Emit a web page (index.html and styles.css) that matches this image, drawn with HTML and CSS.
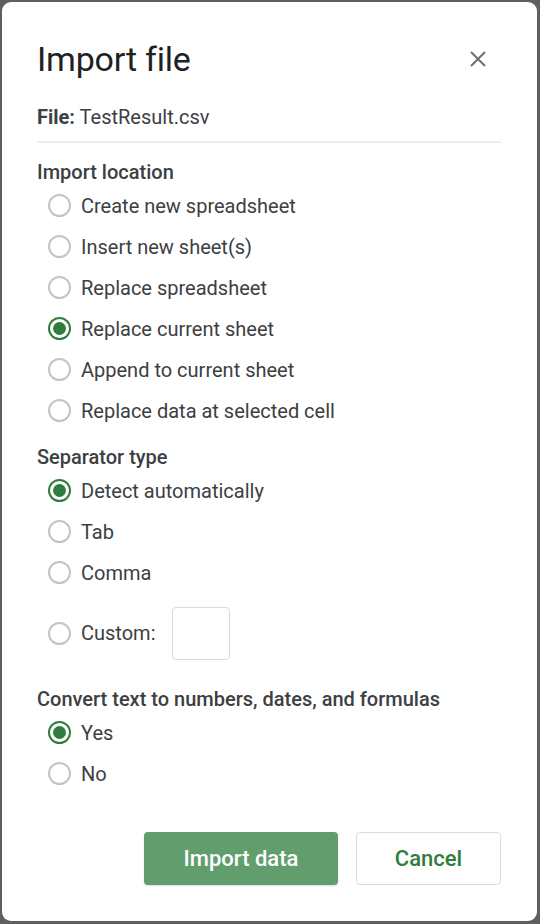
FILE: index.html
```html
<!DOCTYPE html>
<html>
<head>
<meta charset="utf-8">
<link rel="stylesheet" href="styles.css">
</head>
<body>
<div class="dialog">
  <div class="header">
    <h1 class="title">Import file</h1>
    <svg class="close" width="18" height="18" viewBox="0 0 18 18"><path d="M2 2L16 16M16 2L2 16" stroke="#6f6f6f" stroke-width="2" fill="none"/></svg>
  </div>
  <div class="file"><b>File:</b> TestResult.csv</div>
  <div class="divider"></div>

  <div class="heading first">Import location</div>
  <div class="row"><span class="radio"></span><span>Create new spreadsheet</span></div>
  <div class="row"><span class="radio"></span><span>Insert new sheet(s)</span></div>
  <div class="row"><span class="radio"></span><span>Replace spreadsheet</span></div>
  <div class="row"><span class="radio on"></span><span>Replace current sheet</span></div>
  <div class="row"><span class="radio"></span><span>Append to current sheet</span></div>
  <div class="row"><span class="radio"></span><span>Replace data at selected cell</span></div>

  <div class="heading">Separator type</div>
  <div class="row"><span class="radio on"></span><span>Detect automatically</span></div>
  <div class="row"><span class="radio"></span><span>Tab</span></div>
  <div class="row"><span class="radio"></span><span>Comma</span></div>
  <div class="row custom"><span class="radio"></span><span>Custom:</span><span class="box"></span></div>

  <div class="heading">Convert text to numbers, dates, and formulas</div>
  <div class="row"><span class="radio on"></span><span>Yes</span></div>
  <div class="row"><span class="radio"></span><span>No</span></div>

  <div class="actions">
    <button class="btn primary">Import data</button>
    <button class="btn secondary">Cancel</button>
  </div>
</div>
</body>
</html>
```
FILE: styles.css
```css
html, body {
  margin: 0;
  padding: 0;
}
body {
  background: #5f5f5f;
  width: 540px;
  height: 924px;
  overflow: hidden;
  font-family: Roboto, "Liberation Sans", sans-serif;
  color: #202124;
}
.dialog {
  margin: 2px 0 0 2px;
  width: 535px;
  height: 919px;
  background: #fff;
  border-radius: 9px;
  box-sizing: border-box;
  padding: 0 36px 0 35px;
  display: flex;
  flex-direction: column;
}
.header {
  display: flex;
  align-items: center;
  justify-content: space-between;
  height: 60px;
  margin-top: 27px;
}
.title {
  margin: 0;
  font-size: 34px;
  font-weight: 400;
  color: #202124;
  letter-spacing: -0.2px;
}
.close {
  margin-right: 14px;
}
.file {
  margin-top: 16px;
  font-size: 20px;
  line-height: 24px;
  color: #3c4043;
}
.file b {
  font-weight: 700;
  color: #3c4043;
}
.divider {
  height: 2px;
  background: #eeeeee;
  margin-top: 12px;
}
.heading {
  font-size: 20px;
  font-weight: 500;
  line-height: 24px;
  height: 24px;
  color: #3c4043;
  margin-top: 15px;
}
.heading.first {
  margin-top: 17px;
}
.row {
  display: flex;
  align-items: center;
  height: 41px;
  padding-top: 2px;
  box-sizing: border-box;
  font-size: 20px;
  color: #3c4043;
}
.radio {
  width: 19px;
  height: 19px;
  border: 2px solid #c4c4c4;
  border-radius: 50%;
  margin-left: 11px;
  margin-right: 10px;
  box-sizing: content-box;
  position: relative;
  flex: none;
}
.radio.on {
  border-color: #2f7d3e;
}
.radio.on::after {
  content: "";
  position: absolute;
  left: 3px;
  top: 3px;
  width: 13px;
  height: 13px;
  border-radius: 50%;
  background: #2f7d3e;
}
.row.custom {
  height: 80px;
}
.box {
  width: 56px;
  height: 51px;
  border: 1px solid #dadce0;
  border-radius: 4px;
  margin-left: 16px;
}
.actions {
  display: flex;
  justify-content: flex-end;
  gap: 18px;
  margin-top: auto;
  margin-bottom: 36px;
}
.btn {
  height: 53px;
  font-family: Roboto, "Liberation Sans", sans-serif;
  font-size: 22px;
  font-weight: 500;
  border-radius: 4px;
  cursor: pointer;
}
.primary {
  width: 194px;
  background: #629e6d;
  color: #fff;
  border: none;
  box-shadow: 0 1px 2px rgba(0,0,0,0.15);
}
.secondary {
  width: 145px;
  background: #fff;
  color: #2f7d3e;
  border: 1px solid #dadce0;
}
```
